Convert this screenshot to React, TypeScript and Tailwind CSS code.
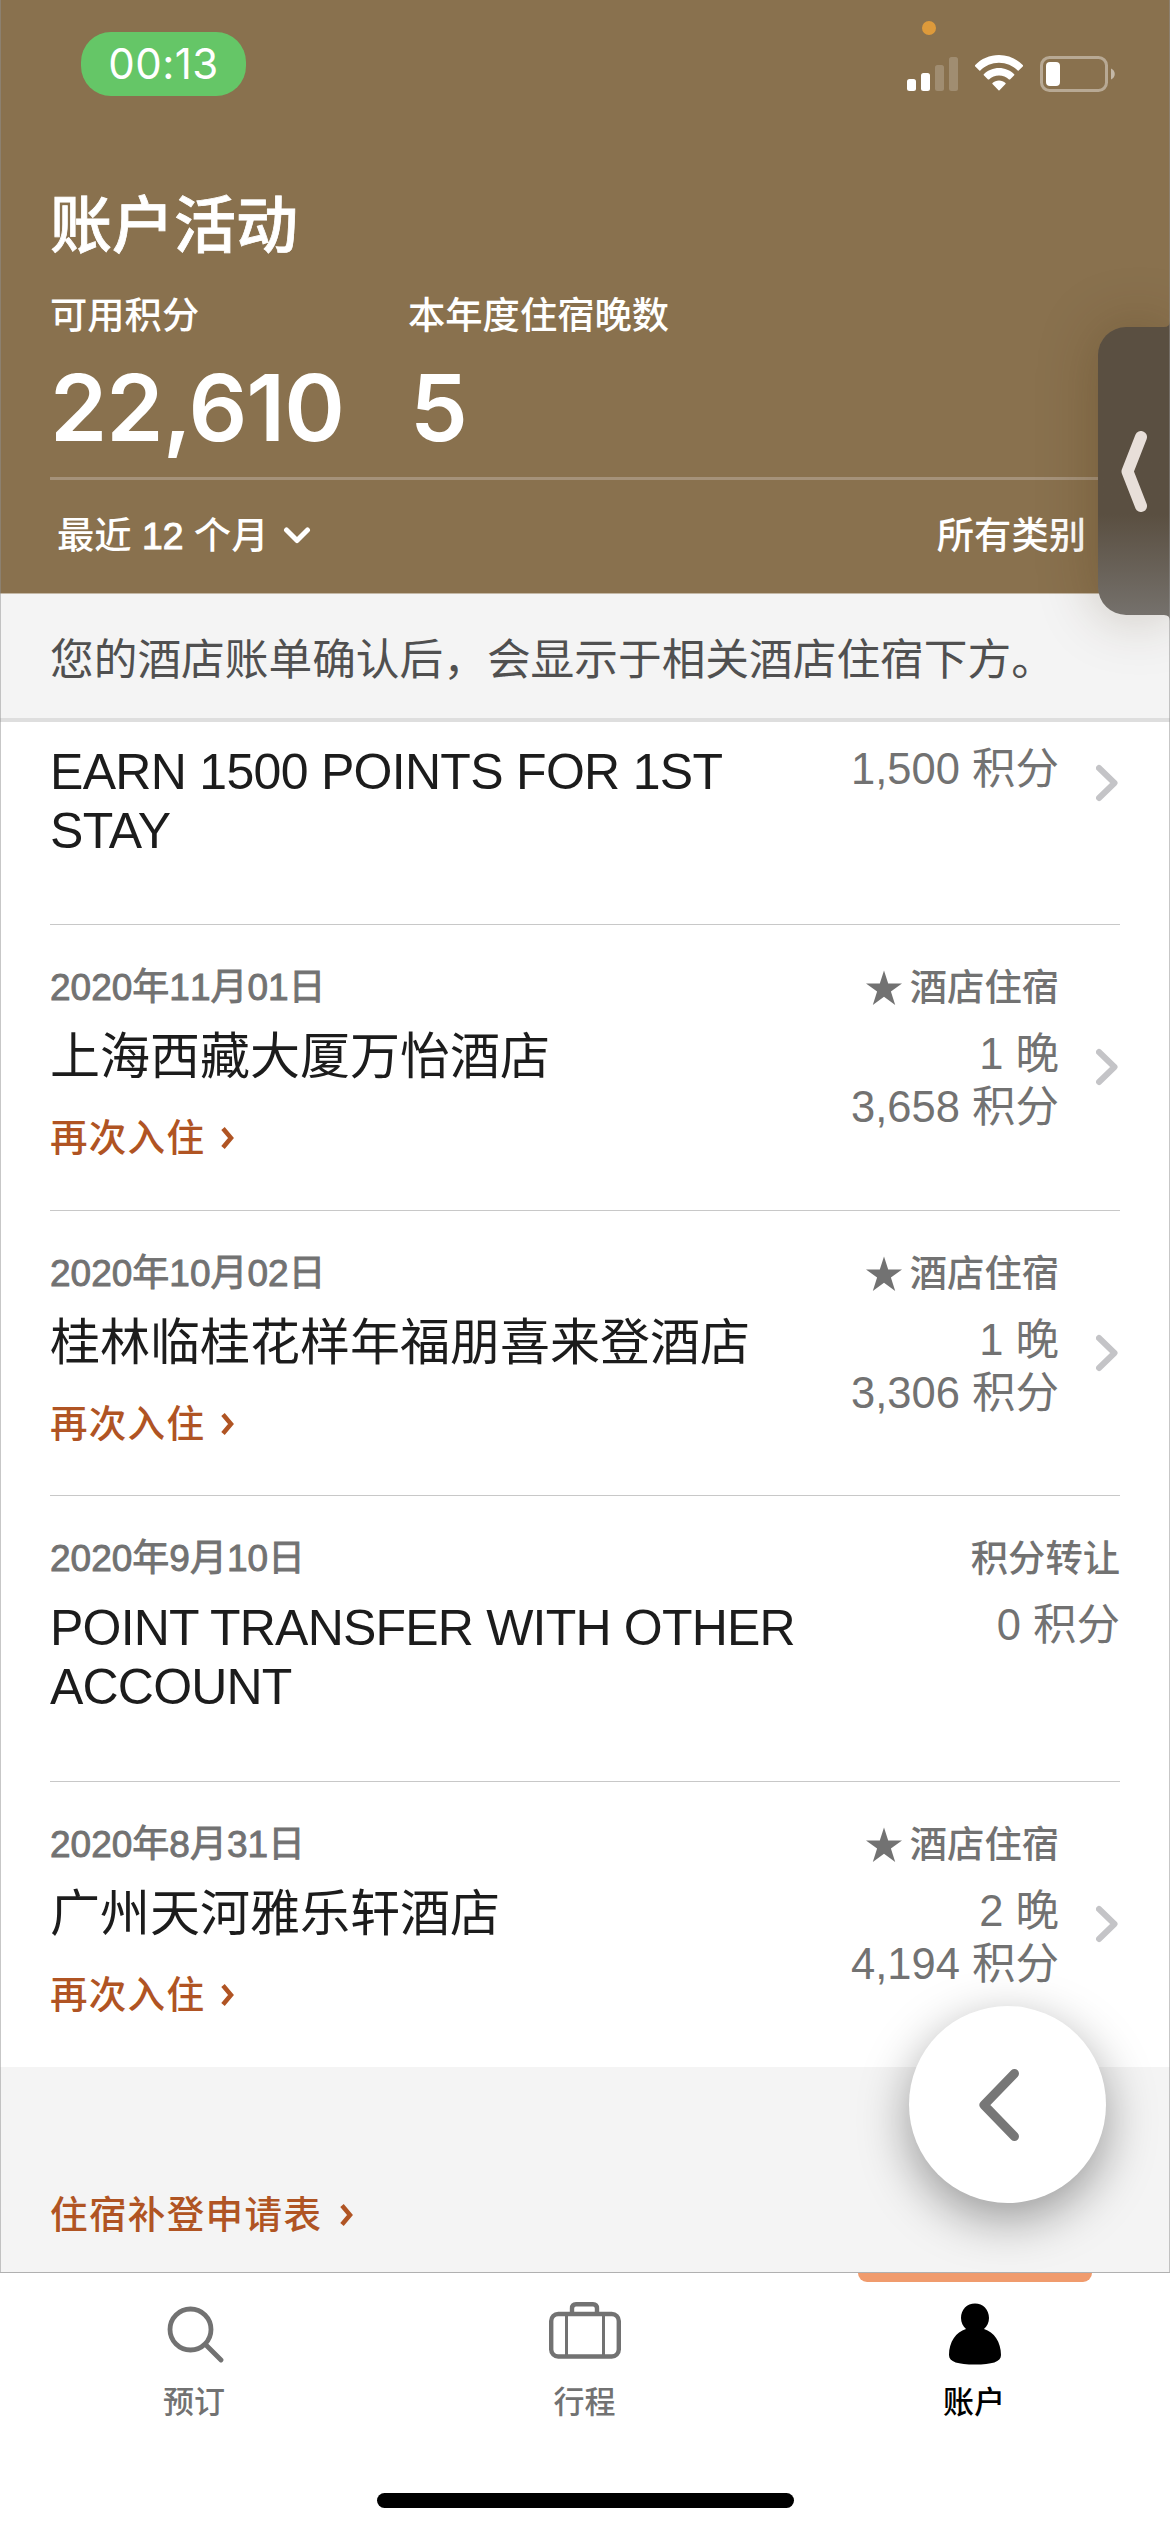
import React from 'react';

type Activity = {
  id: number;
  date: string;
  title: string;
  type: string;
  stay: boolean;
  nights?: string;
  points: string;
};

const activities: Activity[] = [
  { id: 1, date: '2020年11月01日', title: '上海西藏大厦万怡酒店', type: '酒店住宿', stay: true, nights: '1 晚', points: '3,658 积分' },
  { id: 2, date: '2020年10月02日', title: '桂林临桂花样年福朋喜来登酒店', type: '酒店住宿', stay: true, nights: '1 晚', points: '3,306 积分' },
  { id: 3, date: '2020年9月10日', title: 'POINT TRANSFER WITH OTHER ACCOUNT', type: '积分转让', stay: false, points: '0 积分' },
  { id: 4, date: '2020年8月31日', title: '广州天河雅乐轩酒店', type: '酒店住宿', stay: true, nights: '2 晚', points: '4,194 积分' },
];

const RowChevron: React.FC = () => (
  <svg className="w-[24px] h-[38px]" viewBox="0 0 24 38" fill="none" stroke="#c4c4c7" strokeWidth={6} strokeLinecap="round" strokeLinejoin="round">
    <path d="M3 4L18.5 19L3 34" />
  </svg>
);

const LinkChevron: React.FC = () => (
  <svg className="w-[14px] h-[22px]" viewBox="0 0 14 22" fill="none" stroke="#b05423" strokeWidth={4.5}>
    <path d="M2 1.500L10 11L2 20.500" />
  </svg>
);

const StatusBar: React.FC = () => (
  <div className="h-[96px] pt-[32px] pl-[81px] pr-[54px] flex justify-between">
    <div className="w-[165px] h-[64px] rounded-[30px] bg-[#65c667] text-white font-['Inter',sans-serif] text-[42px] tracking-[0.5px] leading-[64px] text-center">00:13</div>
    <div className="relative pt-[23px] flex items-start">
      <span className="absolute left-[15px] top-[-11px] w-[14px] h-[14px] rounded-full bg-[#dd9a3b]" />
      <svg className="w-[52px] h-[36px]" viewBox="0 0 52 36" fill="#fff">
        <rect x="0" y="24" width="9" height="12" rx="2.500" />
        <rect x="14" y="18" width="9" height="18" rx="2.500" />
        <rect x="28" y="10" width="9" height="26" rx="2.500" opacity="0.2" />
        <rect x="42" y="2" width="9" height="34" rx="2.500" opacity="0.2" />
      </svg>
      <svg className="w-[48px] h-[36px] ml-[16px]" viewBox="0 0 48 36" fill="#fff">
        <path d="M24 0C14.700 0 6.300 3.700 0 10.200Q-.3 10.700 0 11.200L4.300 15.500Q4.800 15.900 5.300 15.500C10.200 10.700 16.800 7.800 24 7.800S37.800 10.700 42.700 15.500Q43.200 15.900 43.700 15.500L48 11.200Q48.300 10.700 48 10.200C41.700 3.700 33.300 0 24 0Z" />
        <path d="M24 13C18.200 13 12.800 15.300 8.800 19.200Q8.300 19.700 8.800 20.200L13 24.400Q13.500 24.800 14 24.400C16.700 21.900 20.200 20.500 24 20.500S31.300 21.900 34 24.400Q34.500 24.800 35 24.400L39.200 20.200Q39.700 19.700 39.200 19.200C35.200 15.300 29.800 13 24 13Z" />
        <path d="M24 25.500C21.500 25.500 19.200 26.500 17.500 28Q17 28.600 17.500 29.100L23.500 35.300Q24 35.700 24.500 35.300L30.500 29.100Q31 28.600 30.500 28C28.800 26.500 26.500 25.500 24 25.500Z" />
      </svg>
      <svg className="w-[76px] h-[38px] ml-[17px]" viewBox="0 0 76 38" fill="none">
        <rect x="1.500" y="2.500" width="65" height="33" rx="8" stroke="#fff" strokeOpacity="0.4" strokeWidth="3" />
        <rect x="6" y="7" width="14" height="24" rx="4" fill="#fff" />
        <path d="M71 13.500C76 15.500 76 22.500 71 24.500Z" fill="#fff" fillOpacity="0.5" />
      </svg>
    </div>
  </div>
);

const Header: React.FC = () => (
  <header className="h-[594px] bg-[#89714e] border-b border-[#c4b8a6] text-white flex flex-col">
    <StatusBar />
    <h1 className="mt-[91px] ml-[50px] h-[80px] leading-[80px] text-[62px] font-medium [-webkit-text-stroke:0.8px_#fff]">账户活动</h1>
    <div className="ml-[50px] mt-[27px] flex">
      <div className="w-[358px]">
        <p className="h-[46px] leading-[45px] text-[37.3px] font-medium">可用积分</p>
        <p className="mt-[17px] h-[100px] leading-[101px] text-[92px] font-semibold tracking-[-1px] font-['Inter',sans-serif]">22,610</p>
      </div>
      <div>
        <p className="h-[46px] leading-[45px] text-[37.3px] font-medium">本年度住宿晚数</p>
        <p className="mt-[17px] ml-[2px] h-[100px] leading-[101px] text-[92px] font-semibold font-['Inter',sans-serif]">5</p>
      </div>
    </div>
    <div className="mt-[20px] ml-[50px] h-[3px] bg-[#a5927a]" />
    <div className="flex-1 pl-[57px] pr-[84px] pb-[2px] flex justify-between items-center text-[37.3px] leading-[46px] font-medium">
      <div className="flex items-center">
        <span>最近 <span className="[-webkit-text-stroke:1px_#fff]">12</span> 个月</span>
        <svg className="w-[28px] h-[18px] ml-[15px]" viewBox="0 0 28 18" fill="none" stroke="#fff" strokeWidth={5} strokeLinecap="round" strokeLinejoin="round">
          <path d="M3.500 3L14 13.500L24.500 3" />
        </svg>
      </div>
      <span>所有类别</span>
    </div>
  </header>
);

const ActivityRow: React.FC<{ item: Activity; last: boolean }> = ({ item, last }) => (
  <div className={`mx-[50px] h-[285.5px] flex justify-between ${last ? '' : 'border-b border-[#c8c8c8]'}`}>
    <div className="w-[760px] pt-[40px]">
      <p className="h-[46px] leading-[46px] text-[37px] text-[#727272] [font-kerning:none] [-webkit-text-stroke:0.9px_#727272]">{item.date}</p>
      <p className={`mt-[17px] leading-[59px] text-[50px] text-[#1c1c1c] ${item.stay ? '' : 'tracking-[-0.8px]'}`}>{item.title}</p>
      {item.stay && (
        <a className="mt-[28px] flex items-center gap-[16px] h-[46px] leading-[46px] text-[37.5px] tracking-[1.3px] font-medium text-[#b05423]">
          再次入住
          <LinkChevron />
        </a>
      )}
    </div>
    <div className="flex">
      <div className="pt-[40px] text-right whitespace-nowrap text-[#727272]">
        <p className="h-[46px] leading-[46px] text-[37.3px] font-medium flex items-center justify-end gap-[8px]">
          {item.stay && (
            <svg className="w-[36px] h-[36px]" viewBox="0 0 36 36" fill="#727272">
              <path d="M18 0.500L22.200 13.500H36L24.900 21.600L29.200 35L18 26.800L6.800 35L11.100 21.600L0 13.500H13.800Z" />
            </svg>
          )}
          {item.type}
        </p>
        <div className="mt-[17px] leading-[53px] text-[43.5px]">
          {item.nights && <p>{item.nights}</p>}
          <p>{item.points}</p>
        </div>
      </div>
      {item.stay && (
        <div className="w-[61px] flex items-center justify-end">
          <RowChevron />
        </div>
      )}
    </div>
  </div>
);

const TabBar: React.FC = () => (
  <nav className="h-[260px] bg-white border-t border-[#b0b0b0] grid grid-cols-3">
    <div className="flex flex-col items-center pt-[33px] text-[#727272]">
      <svg className="w-[58px] h-[58px]" viewBox="0 0 58 58" fill="none" stroke="currentColor" strokeWidth={4.8} strokeLinecap="round">
        <circle cx="24.500" cy="23.500" r="20.500" />
        <path d="M40 39L55 54" />
      </svg>
      <span className="mt-[19px] mr-[2px] leading-[40px] text-[31px] font-medium">预订</span>
    </div>
    <div className="flex flex-col items-center pt-[29px] text-[#727272]">
      <svg className="w-[72px] h-[58px]" viewBox="0 0 72 58" fill="none" stroke="currentColor">
        <rect x="2.200" y="12" width="67.600" height="42.500" rx="7" strokeWidth="4.400" />
        <path d="M23 12V6.500Q23 2.200 27 2.200H44Q48 2.200 48 6.500V12" strokeWidth="4.400" />
        <path d="M17.500 12V54M54.500 12V54" strokeWidth="3" />
      </svg>
      <span className="mt-[23px] mr-[1px] leading-[40px] text-[31px] font-medium">行程</span>
    </div>
    <div className="relative flex flex-col items-center pt-[30px] text-black">
      <span className="absolute left-[78px] top-0 w-[234px] h-[9px] rounded-b-[9px] bg-[#f09b6d]" />
      <svg className="w-[52px] h-[62px]" viewBox="0 0 52 62" fill="currentColor">
        <path d="M26 0.500C18 0.500 12 6.500 12 15C12 19.500 14 23.500 17 26C7 29 0 39 0 52C0 59 9 61.500 26 61.500S52 59 52 52C52 39 45 29 35 26C38 23.500 40 19.500 40 15C40 6.500 34 0.500 26 0.500Z" />
      </svg>
      <span className="mt-[18px] mr-[2px] leading-[40px] text-[31px] font-medium">账户</span>
    </div>
  </nav>
);

export default function App() {
  return (
    <div lang="zh-CN" className="relative w-[1170px] h-[2532px] overflow-hidden bg-white font-['Liberation_Sans','Noto_Sans_CJK_SC',sans-serif]">
      <Header />

      <div className="h-[128px] pt-[39px] pl-[50px] bg-[#f4f4f4] border-b-4 border-[#dedede]">
        <p className="leading-[54px] text-[43.7px] text-[#505050]">您的酒店账单确认后，会显示于相关酒店住宿下方。</p>
      </div>

      <main>
        <div className="mx-[50px] h-[203px] flex justify-between border-b border-[#c8c8c8]">
          <p className="w-[740px] pt-[21px] leading-[59px] text-[50px] tracking-[-0.7px] text-[#1c1c1c]">EARN 1500 POINTS FOR 1ST STAY</p>
          <div className="flex">
            <p className="pt-[21px] leading-[53px] text-[43.5px] text-[#727272] whitespace-nowrap">1,500 积分</p>
            <div className="w-[61px] pt-[42px] flex justify-end">
              <RowChevron />
            </div>
          </div>
        </div>
        {activities.map((item, i) => (
          <ActivityRow key={item.id} item={item} last={i === activities.length - 1} />
        ))}
      </main>

      <div className="h-[205px] pt-[125px] pl-[50px] bg-[#f4f4f4]">
        <a className="flex items-center gap-[18px] h-[46px] leading-[46px] text-[37.5px] tracking-[1.4px] font-medium text-[#b05423]">
          住宿补登申请表
          <LinkChevron />
        </a>
      </div>

      <TabBar />

      {/* Home indicator */}
      <div className="absolute left-[377px] top-[2493px] w-[417px] h-[15px] rounded-full bg-black" />

      {/* Floating back button */}
      <button className="absolute left-[909px] top-[2006px] w-[197px] h-[197px] rounded-full bg-white shadow-[0_16px_50px_rgba(0,0,0,0.38)] [clip-path:inset(-90px_-90px_-69px_-90px)]">
        <svg className="absolute left-[70px] top-[62px] w-[42px] h-[74px]" viewBox="0 0 42 74" fill="none" stroke="#777" strokeWidth={9} strokeLinecap="round" strokeLinejoin="round">
          <path d="M35.500 5.500L5 37L35.500 68.500" />
        </svg>
      </button>

      {/* Edge handle */}
      <div className="absolute right-0 top-[327px] w-[72px] h-[288px] rounded-l-[28px] bg-linear-to-b from-[#5a4f41] from-65% to-[#75716c] shadow-[0_0_60px_rgba(60,40,0,0.26)]">
        <svg className="absolute left-[23px] top-[104px] w-[27px] h-[81px]" viewBox="0 0 27 81" fill="none" stroke="#e8dfd9" strokeWidth={12} strokeLinecap="round" strokeLinejoin="round">
          <path d="M20 6L6.500 40.500L20 75" />
        </svg>
        <svg className="absolute right-0 top-[-6px] w-[6px] h-[6px]" viewBox="0 0 6 6" fill="#5a4f41">
          <path d="M6 0Q6 6 0 6H6Z" />
        </svg>
        <svg className="absolute right-0 bottom-[-6px] w-[6px] h-[6px]" viewBox="0 0 6 6" fill="#75716c">
          <path d="M0 0Q6 0 6 6V0Z" />
        </svg>
      </div>

      <div className="absolute inset-x-0 top-0 h-[2272px] border-x border-[#909090]/50 pointer-events-none" />
    </div>
  );
}
